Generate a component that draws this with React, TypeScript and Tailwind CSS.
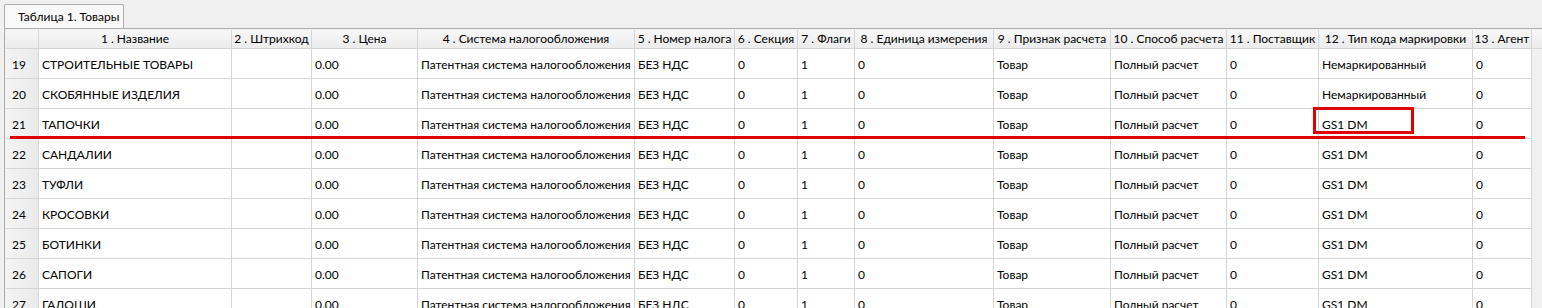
const cols = [
  { title: "1 . Название", w: 193 },
  { title: "2 . Штрихкод", w: 80 },
  { title: "3 . Цена", w: 106 },
  { title: "4 . Система налогообложения", w: 217 },
  { title: "5 . Номер налога", w: 100 },
  { title: "6 . Секция", w: 63 },
  { title: "7 . Флаги", w: 57 },
  { title: "8 . Единица измерения", w: 139 },
  { title: "9 . Признак расчета", w: 117 },
  { title: "10 . Способ расчета", w: 116 },
  { title: "11 . Поставщик", w: 92 },
  { title: "12 . Тип кода маркировки", w: 154 },
  { title: "13 . Агент", w: 59 },
];

const names: [number, string, string][] = [
  [19, "СТРОИТЕЛЬНЫЕ ТОВАРЫ", "Немаркированный"],
  [20, "СКОБЯННЫЕ ИЗДЕЛИЯ", "Немаркированный"],
  [21, "ТАПОЧКИ", "GS1 DM"],
  [22, "САНДАЛИИ", "GS1 DM"],
  [23, "ТУФЛИ", "GS1 DM"],
  [24, "КРОСОВКИ", "GS1 DM"],
  [25, "БОТИНКИ", "GS1 DM"],
  [26, "САПОГИ", "GS1 DM"],
  [27, "ГАЛОШИ", "GS1 DM"],
];

export default function App() {
  return (
    <div
      className="relative w-[1542px] h-[308px] overflow-hidden bg-[#f0f0f0] text-[12px] text-black"
      style={{ fontFamily: 'Lato, "Noto Sans", sans-serif' }}
    >
      {/* Tab bar */}
      <div className="flex h-[28px] pl-[4px] pt-[4px]">
        <div className="relative z-10 -mb-px flex h-[24px] w-[120px] items-center whitespace-nowrap rounded-t-[2px] border border-b-0 border-[#adadad] bg-[#f9f9f9] pl-[13px] leading-none">
          Таблица 1. Товары
        </div>
      </div>

      {/* Panel */}
      <div className="ml-[4px] border-l border-t border-[#adadad] bg-[#f0f0f0] pl-[1px] pt-px">
        {/* Header */}
        <div className="flex h-[19px] border-b border-[#d5d5d5] bg-gradient-to-b from-[#f7f7f7] to-[#ececec]">
          <div className="w-[33px] shrink-0 border-r border-[#d5d5d5]" />
          {cols.map((c) => (
            <div
              key={c.title}
              style={{ width: c.w }}
              className="flex shrink-0 items-center justify-center whitespace-nowrap border-r border-[#d5d5d5] leading-none"
            >
              {c.title}
            </div>
          ))}
        </div>

        {/* Rows */}
        {names.map(([n, name, mark]) => {
          const vals = [
            name,
            "",
            "0.00",
            "Патентная система налогообложения",
            "БЕЗ НДС",
            "0",
            "1",
            "0",
            "Товар",
            "Полный расчет",
            "0",
            mark,
            "0",
          ];
          return (
            <div key={n} className="flex h-[30px]">
              <div className="flex w-[33px] shrink-0 items-center border-b border-r border-[#d5d5d5] bg-gradient-to-r from-[#f4f4f4] to-[#eaeaea] pl-[6px] pt-[2px]">
                {n}
              </div>
              {vals.map((v, i) => (
                <div
                  key={i}
                  style={{ width: cols[i].w }}
                  className="flex shrink-0 items-center overflow-hidden whitespace-nowrap border-b border-r border-[#d5d5d5] bg-white pl-[3px] pt-[2px]"
                >
                  {v}
                </div>
              ))}
            </div>
          );
        })}
      </div>

      {/* Annotation: highlight box and underline */}
      <div className="absolute left-[1313px] top-[107px] h-[27px] w-[101px] border-[3px] border-[#e00000]" />
      <div className="absolute left-[10px] top-[136px] h-[3px] w-[1515px] bg-[#e00000]" />
    </div>
  );
}
